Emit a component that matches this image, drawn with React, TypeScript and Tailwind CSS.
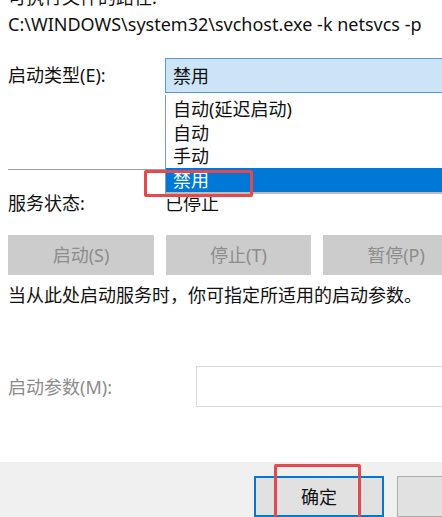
import React from 'react';

const font = { fontFamily: '"Noto Sans", "Noto Sans CJK SC", sans-serif' };

function GrayButton({ label, className = '' }: { label: string; className?: string }) {
  return (
    <div
      className={`h-[40px] shrink-0 bg-[#cccccc] text-[#8c8c8c] flex items-center justify-center ${className}`}
    >
      {label}
    </div>
  );
}

export default function App() {
  const options = ['自动(延迟启动)', '自动', '手动', '禁用'];

  return (
    <div
      className="relative w-[442px] h-[517px] overflow-hidden bg-white text-[18px] leading-none text-[#111111]"
      style={font}
    >
      <div className="flex flex-col h-full">
        {/* path */}
        <div className="px-2 mt-[-13px] h-[20px] flex items-center whitespace-nowrap">可执行文件的路径:</div>
        <div className="px-2 mt-[6px] h-[22px] flex items-center whitespace-nowrap">
          C:\WINDOWS\system32\svchost.exe -k netsvcs -p
        </div>

        {/* startup type */}
        <div className="mt-[23px] flex items-start">
          <div className="w-[165px] shrink-0 pl-2 h-[34px] flex items-center">启动类型(E):</div>
          <div className="w-[300px] shrink-0 h-[35px] bg-[#cce4f7] border border-[#5a9ad8] flex items-center pl-[7px]">
            禁用
          </div>
        </div>

        <div className="mt-[76px] ml-2 h-px bg-[#a0a0a0]" />

        {/* status */}
        <div className="mt-[24px] flex items-center h-[18px]">
          <div className="w-[165px] shrink-0 pl-2">服务状态:</div>
          <div>已停止</div>
        </div>

        <div className="mt-[23px] flex gap-[12px] pl-2">
          <GrayButton label="启动(S)" className="w-[146px]" />
          <GrayButton label="停止(T)" className="w-[145px]" />
          <GrayButton label="暂停(P)" className="w-[146px]" />
        </div>

        <div className="mt-[10px] px-2 h-[20px] flex items-center whitespace-nowrap">
          当从此处启动服务时，你可指定所适用的启动参数。
        </div>

        <div className="mt-[61px] flex items-center">
          <div className="w-[196px] shrink-0 pl-2 text-[#8c8c8c]">启动参数(M):</div>
          <div className="w-[260px] shrink-0 h-[41px] border border-[#d9d9d9] bg-white" />
        </div>

        {/* footer */}
        <div className="mt-[55px] flex-1 bg-[#f0f0f0] pt-[14px] flex">
          <div className="ml-[254px] shrink-0 w-[130px] h-[41px] bg-[#e1e1e1] border-2 border-[#0078d7] flex items-center justify-center">
            确定
          </div>
          <div className="ml-[13px] shrink-0 w-[80px] h-[41px] bg-[#e1e1e1] border border-[#adadad]" />
        </div>
      </div>

      {/* open dropdown list */}
      <div className="absolute left-[165px] top-[95px] w-[300px] h-[99px] bg-white border-l border-[#7a9cc4] border-b-2 border-b-[#bcbcbc] pt-[2px] flex flex-col">
        {options.map((o) => (
          <div
            key={o}
            className={`h-[24px] flex items-center pl-[7px] ${o === '禁用' ? 'bg-[#0078d7] text-white' : ''}`}
          >
            {o}
          </div>
        ))}
      </div>

      {/* annotation boxes */}
      <div className="absolute left-[144px] top-[170px] w-[109px] h-[27px] border-[3px] border-[#e5484d] rounded-[2px]" />
      <div className="absolute left-[274px] top-[464px] w-[87px] h-[60px] border-[3px] border-[#e5484d] rounded-[2px]" />
    </div>
  );
}
